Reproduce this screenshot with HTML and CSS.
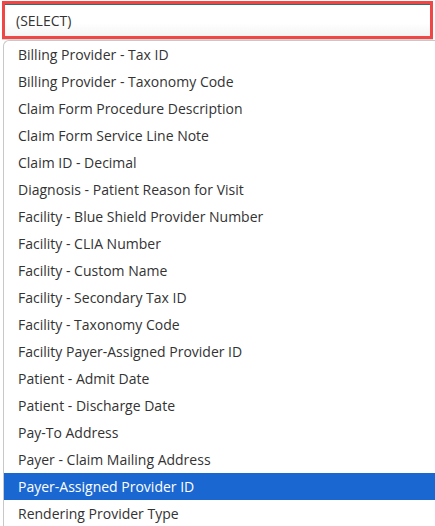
FILE: index.html
```html
<!DOCTYPE html>
<html lang="en">
<head>
  <meta charset="UTF-8" />
  <meta name="viewport" content="width=device-width, initial-scale=1.0"/>
  <title>Select field</title>
  <link rel="stylesheet" href="styles.css">
</head>
<body>
  <div class="picker">
    <div class="picker-input">(SELECT)</div>
  </div>

  <ul class="options">
    <li>Billing Provider - Tax ID</li>
    <li>Billing Provider - Taxonomy Code</li>
    <li>Claim Form Procedure Description</li>
    <li>Claim Form Service Line Note</li>
    <li>Claim ID - Decimal</li>
    <li>Diagnosis - Patient Reason for Visit</li>
    <li>Facility - Blue Shield Provider Number</li>
    <li>Facility - CLIA Number</li>
    <li>Facility - Custom Name</li>
    <li>Facility - Secondary Tax ID</li>
    <li>Facility - Taxonomy Code</li>
    <li>Facility Payer-Assigned Provider ID</li>
    <li>Patient - Admit Date</li>
    <li>Patient - Discharge Date</li>
    <li>Pay-To Address</li>
    <li>Payer - Claim Mailing Address</li>
    <li class="active">Payer-Assigned Provider ID</li>
    <li>Rendering Provider Type</li>
  </ul>
</body>
</html>
```

FILE: styles.css
```css
body {
  margin: 0;
  font-family: 'Open Sans', sans-serif;
  color: #333;
  background: #fff;
  overflow: hidden;
}

.picker {
  padding: 1px 2px 0 2px;
}

.picker-input {
  height: 32px;
  border: 3px solid #f04646;
  box-shadow: inset 0 1px 0 #2f6f74, 0 1px 0 #d6d6d6;
  background: linear-gradient(#fff 60%, #f4f4f4);
  font-size: 14px;
  line-height: 33px;
  padding-left: 11px;
  color: #333;
}

.options {
  list-style: none;
  margin: 1px 0 0 3px;
  padding: 0;
  border-left: 1px solid #c8c8c8;
  border-top: 1px solid #c8c8c8;
  border-top-left-radius: 6px;
}

.options li {
  height: 27px;
  line-height: 27px;
  padding-left: 14px;
  font-size: 14px;
  white-space: nowrap;
}

.options li.active {
  background: #1a67d2;
  color: #fff;
}
```
